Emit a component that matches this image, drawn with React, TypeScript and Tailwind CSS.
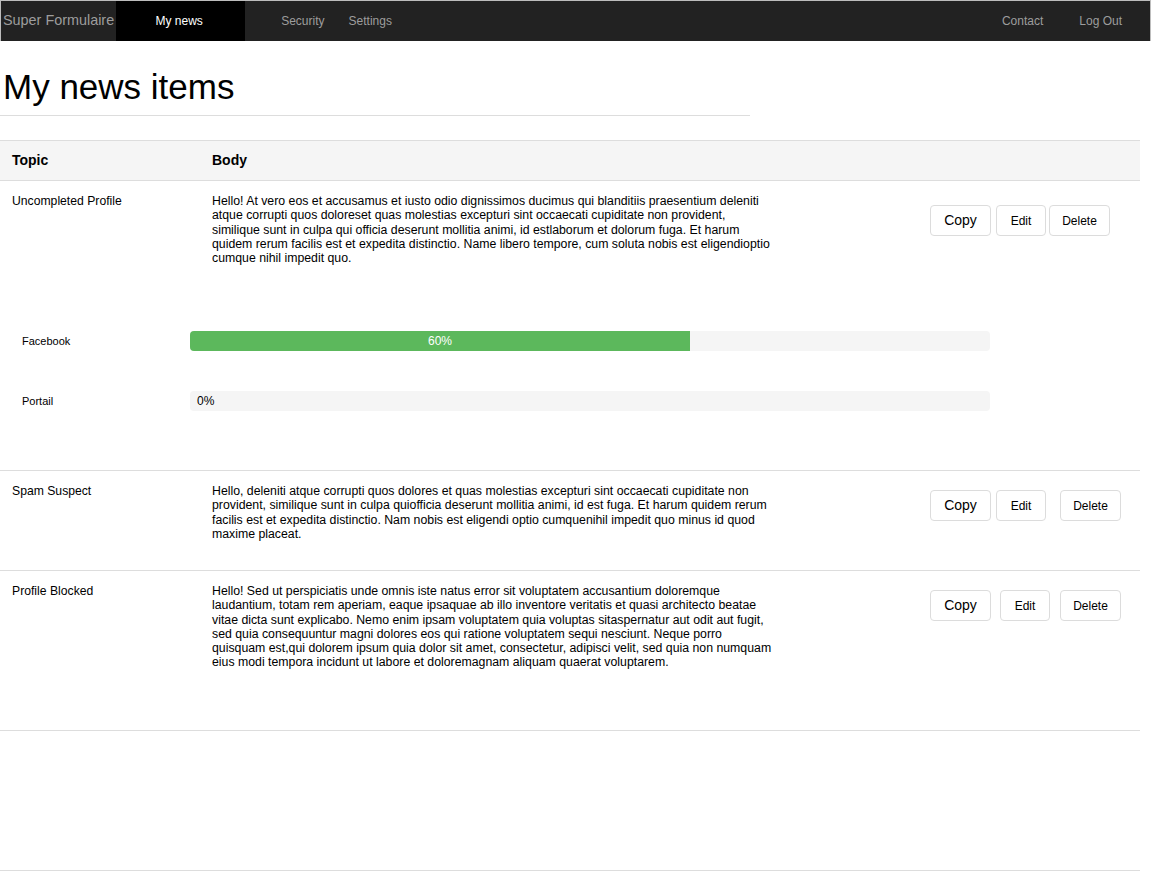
import React from 'react';

interface NewsItem {
  topic: string;
  body: string;
  progress?: { label: string; value: number }[];
  height: string;
  btnTop: string;
  editGap: string;
  deleteGap: string;
}

const items: NewsItem[] = [
  {
    topic: 'Uncompleted Profile',
    body: 'Hello! At vero eos et accusamus et iusto odio dignissimos ducimus qui blanditiis praesentium deleniti atque corrupti quos doloreset quas molestias excepturi sint occaecati cupiditate non provident, similique sunt in culpa qui officia deserunt mollitia animi, id estlaborum et dolorum fuga. Et harum quidem rerum facilis est et expedita distinctio. Name libero tempore, cum soluta nobis est eligendioptio cumque nihil impedit quo.',
    progress: [
      { label: 'Facebook', value: 60 },
      { label: 'Portail', value: 0 },
    ],
    height: 'h-[130px]',
    btnTop: 'pt-[24px]',
    editGap: 'ml-[5px]',
    deleteGap: 'ml-[3px]',
  },
  {
    topic: 'Spam Suspect',
    body: 'Hello, deleniti atque corrupti quos dolores et quas molestias excepturi sint occaecati cupiditate non provident, similique sunt in culpa quiofficia deserunt mollitia animi, id est fuga. Et harum quidem rerum facilis est et expedita distinctio. Nam nobis est eligendi optio cumquenihil impedit quo minus id quod maxime placeat.',
    height: 'h-[99px]',
    btnTop: 'pt-[19px]',
    editGap: 'ml-[5px]',
    deleteGap: 'ml-[14px]',
  },
  {
    topic: 'Profile Blocked',
    body: 'Hello! Sed ut perspiciatis unde omnis iste natus error sit voluptatem accusantium doloremque laudantium, totam rem aperiam, eaque ipsaquae ab illo inventore veritatis et quasi architecto beatae vitae dicta sunt explicabo. Nemo enim ipsam voluptatem quia voluptas sitaspernatur aut odit aut fugit, sed quia consequuntur magni dolores eos qui ratione voluptatem sequi nesciunt. Neque porro quisquam est,qui dolorem ipsum quia dolor sit amet, consectetur, adipisci velit, sed quia non numquam eius modi tempora incidunt ut labore et doloremagnam aliquam quaerat voluptarem.',
    height: 'h-[159px]',
    btnTop: 'pt-[19px]',
    editGap: 'ml-[9px]',
    deleteGap: 'ml-[10px]',
  },
];

function Btn({ label, big, className }: { label: string; big?: boolean; className?: string }) {
  return (
    <button
      className={`h-[31px] rounded-[4px] border border-[#dcdcdc] bg-white text-black ${
        big ? 'w-[61px] text-[14px]' : 'text-[12px]'
      } ${className || ''}`}
    >
      {label}
    </button>
  );
}

function Progress({ label, value }: { label: string; value: number }) {
  return (
    <div className="flex h-[60px] items-center">
      <div className="w-[190px] pl-[22px] text-[11px] text-black">{label}</div>
      <div className="relative h-[20px] w-[800px] overflow-hidden rounded-[4px] bg-[#f5f5f5]">
        {value > 0 ? (
          <div className="flex h-full w-[500px] items-center justify-center bg-[#5cb85c] text-[12px] text-white">
            {value}%
          </div>
        ) : (
          <div className="flex h-full items-center pl-[7px] text-[12px] text-black">{value}%</div>
        )}
      </div>
    </div>
  );
}

export default function App() {
  return (
    <div className="min-h-[871px] bg-white font-['Liberation_Sans',Arial,sans-serif] text-black">
      {/* navbar */}
      <div className="flex h-[41px] items-stretch border border-b-0 border-[#bdbdbd] bg-[#222]">
        <div className="flex items-center pl-[2px] pr-[2px] text-[14.4px] text-[#9d9d9d]">Super Formulaire</div>
        <div className="flex w-[129px] items-center justify-center bg-black pr-[3px] text-[12px] text-white">My news</div>
        <div className="ml-[36px] flex items-center text-[12px] text-[#9d9d9d]">Security</div>
        <div className="ml-[24px] flex items-center text-[12px] text-[#9d9d9d]">Settings</div>
        <div className="flex-1" />
        <div className="flex items-center text-[12px] text-[#9d9d9d]">Contact</div>
        <div className="ml-[36px] mr-[28px] flex items-center text-[12px] text-[#9d9d9d]">Log Out</div>
      </div>

      {/* heading */}
      <div className="w-[750px] border-b border-[#ddd] pl-[3px] pt-[24px] pb-[7px]">
        <h1 className="text-[35px] leading-[43px] font-normal">My news items</h1>
      </div>

      {/* table */}
      <div className="mt-[24px] w-[1140px]">
        <div className="grid h-[41px] grid-cols-[200px_1fr] items-center border-y border-[#ddd] bg-[#f5f5f5] text-[14px] font-bold">
          <div className="pl-[12px]">Topic</div>
          <div className="pl-[12px]">Body</div>
        </div>

        {items.map((item) => (
          <div key={item.topic} className="border-b border-[#ddd]">
            <div className={`grid grid-cols-[200px_730px_1fr] ${item.height}`}>
              <div className="pl-[12px] pt-[13px] text-[12.2px] leading-[14.3px]">{item.topic}</div>
              <div className="pl-[12px] pt-[13px]">
                <p className="w-[562px] text-[12.3px] leading-[14.3px]">{item.body}</p>
              </div>
              <div className={`flex items-start ${item.btnTop}`}>
                <Btn label="Copy" big />
                <Btn label="Edit" className={`w-[50px] ${item.editGap}`} />
                <Btn label="Delete" className={`w-[61px] ${item.deleteGap}`} />
              </div>
            </div>
            {item.progress && (
              <div className="pb-[39px]">
                {item.progress.map((p) => (
                  <Progress key={p.label} label={p.label} value={p.value} />
                ))}
              </div>
            )}
          </div>
        ))}

        <div className="h-[140px] border-b border-[#ddd]" />
      </div>
    </div>
  );
}
